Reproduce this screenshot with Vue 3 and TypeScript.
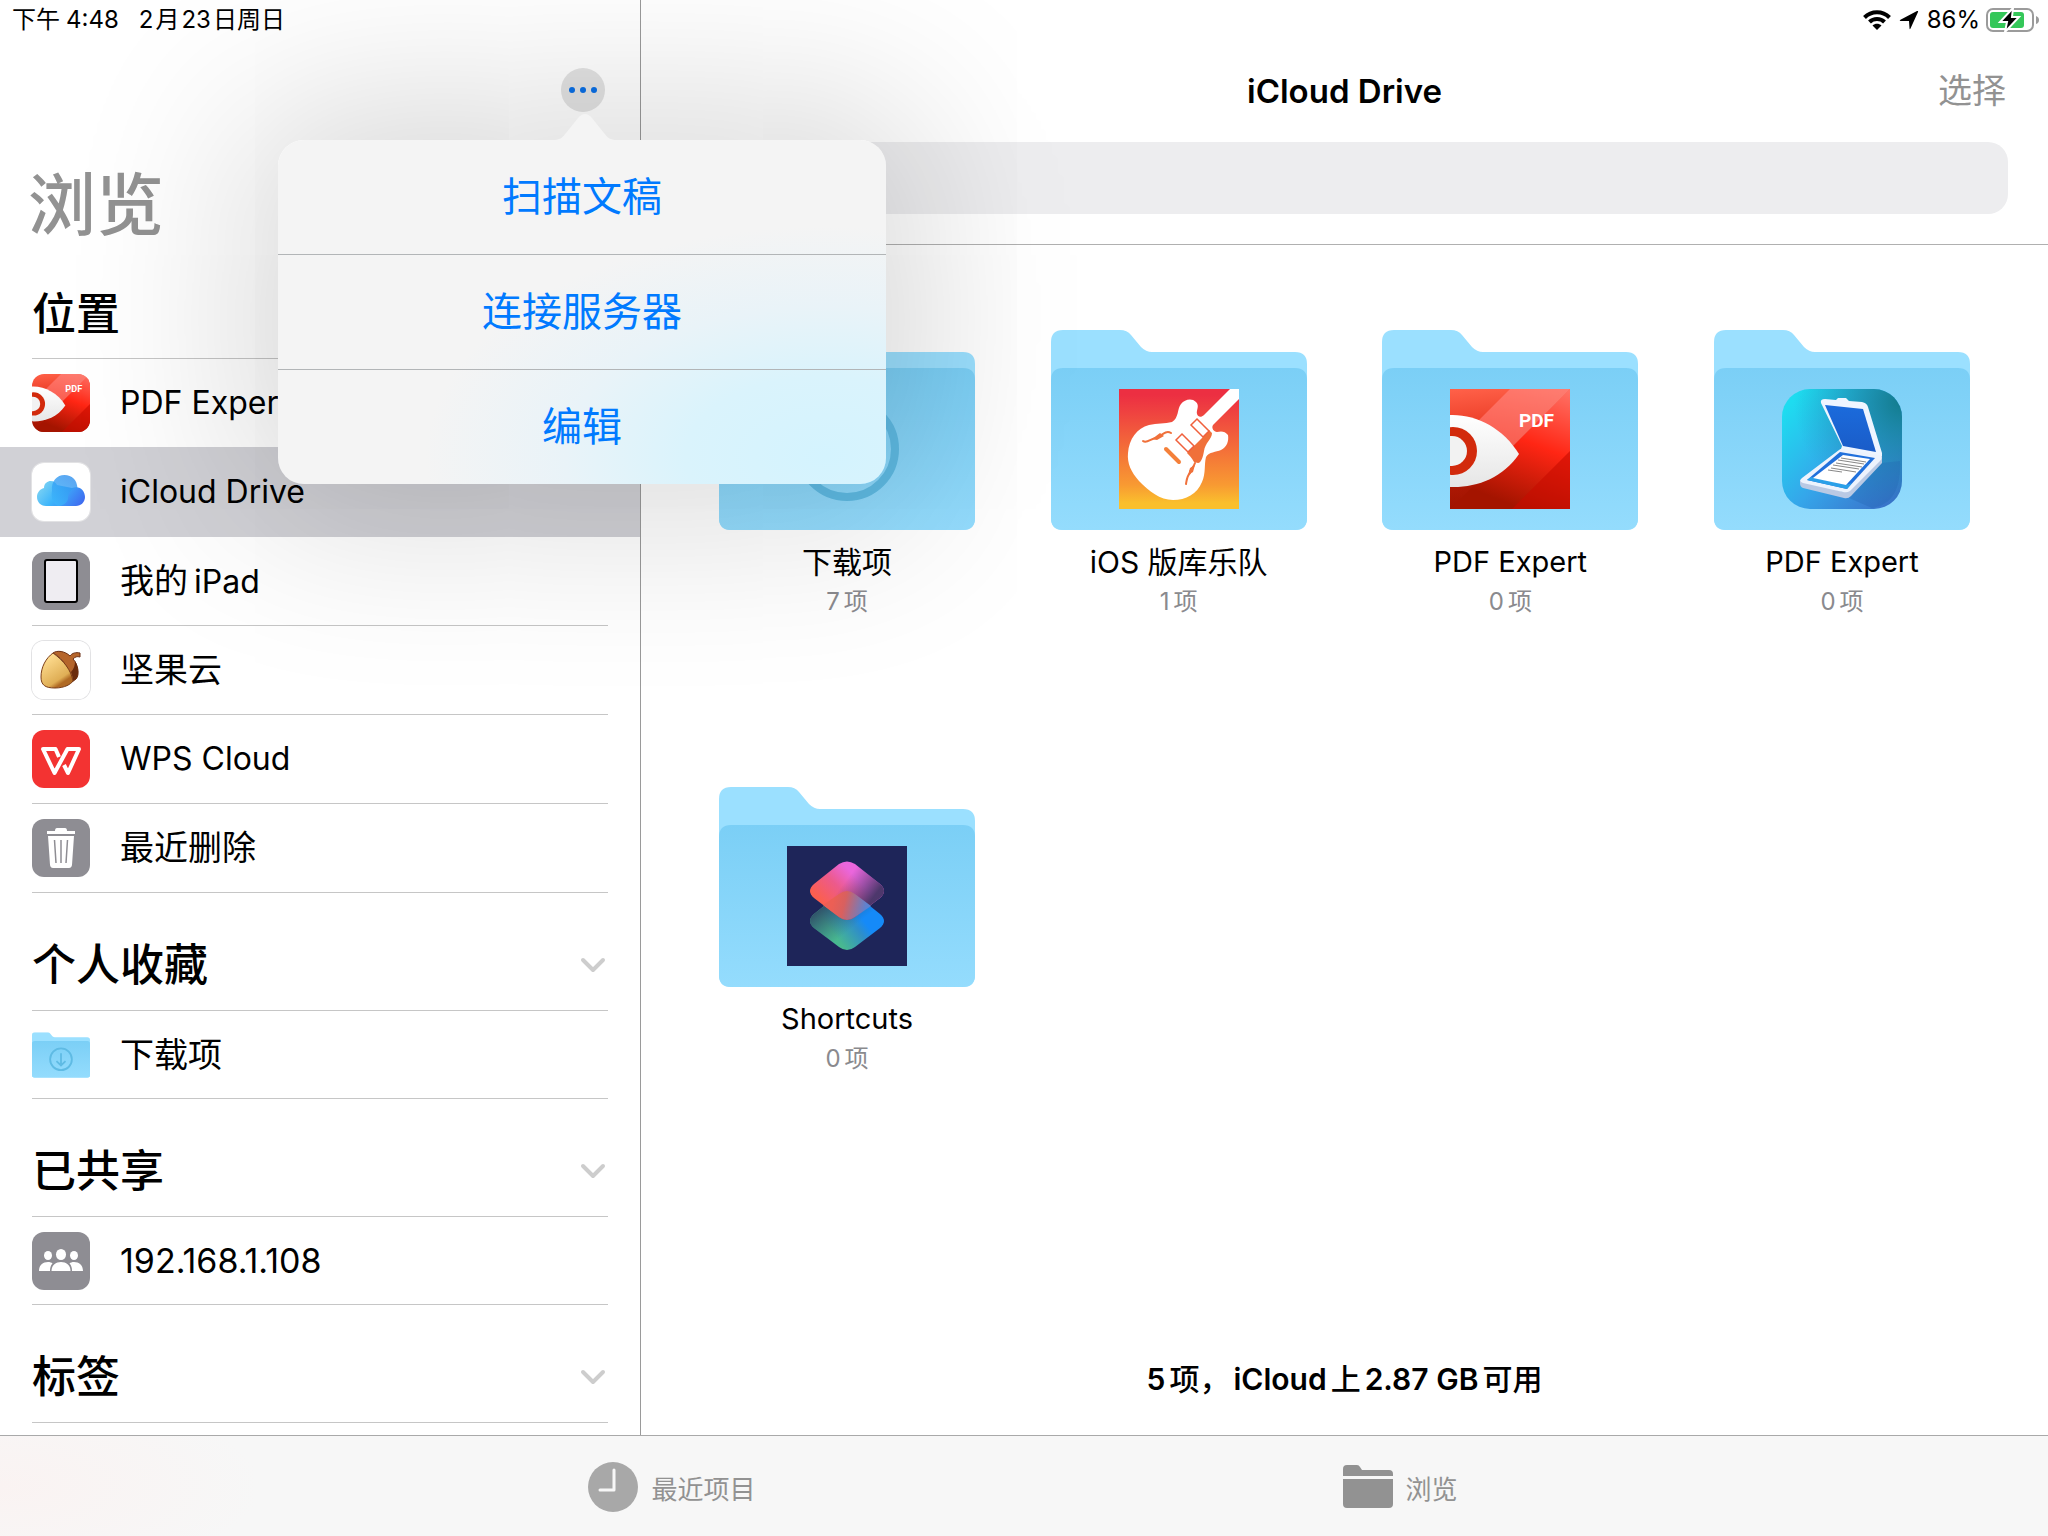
<script setup lang="ts">
import { ref } from 'vue'

interface Place { id: string; icon: string; parts: string[]; active?: boolean }
interface Section { title: string; collapsible: boolean; rows: Place[] }
interface Folder { id: string; icon: string; name: string; count: number }

const sections: Section[] = [
  {
    title: '位置',
    collapsible: false,
    rows: [
      { id: 'pdf', icon: 'pdf', parts: ['PDF Expert'] },
      { id: 'icloud', icon: 'icloud', parts: ['iCloud Drive'], active: true },
      { id: 'ipad', icon: 'ipad', parts: ['我的', 'iPad'] },
      { id: 'nut', icon: 'nut', parts: ['坚果云'] },
      { id: 'wps', icon: 'wps', parts: ['WPS Cloud'] },
      { id: 'trash', icon: 'trash', parts: ['最近删除'] },
    ],
  },
  { title: '个人收藏', collapsible: true, rows: [{ id: 'downloads', icon: 'folder', parts: ['下载项'] }] },
  { title: '已共享', collapsible: true, rows: [{ id: 'server', icon: 'people', parts: ['192.168.1.108'] }] },
  { title: '标签', collapsible: true, rows: [] },
]

const folders: Folder[] = [
  { id: 'downloads', icon: 'download', name: '下载项', count: 7 },
  { id: 'garageband', icon: 'guitar', name: 'iOS 版库乐队', count: 1 },
  { id: 'pdf', icon: 'pdf', name: 'PDF Expert', count: 0 },
  { id: 'scanner', icon: 'scanner', name: 'PDF Expert', count: 0 },
  { id: 'shortcuts', icon: 'shortcuts', name: 'Shortcuts', count: 0 },
]

const menu: string[] = ['扫描文稿', '连接服务器', '编辑']
const menuOpen = ref(true)
const query = ref('')

// Names made of Latin letters only are set a step smaller than Chinese ones.
const isLatin = (text: string): boolean => /^[A-Za-z ]+$/.test(text)
</script>

<template>
  <svg class="defs" width="0" height="0" aria-hidden="true">
    <defs>
      <linearGradient id="g-front" x1="0" y1="0" x2="0" y2="1">
        <stop offset="0" stop-color="#7bcff6" /><stop offset="1" stop-color="#94dcfd" />
      </linearGradient>
      <linearGradient id="g-pdf" x1="0.1" y1="0" x2="0.2" y2="1">
        <stop offset="0" stop-color="#ff6048" /><stop offset="0.5" stop-color="#e02a14" /><stop offset="1" stop-color="#981200" />
      </linearGradient>
      <linearGradient id="g-pdf2" x1="1" y1="0" x2="0.6" y2="1">
        <stop offset="0" stop-color="#ff7468" /><stop offset="0.5" stop-color="#ff2614" /><stop offset="1" stop-color="#a41400" />
      </linearGradient>
      <linearGradient id="g-eye" x1="0" y1="0" x2="0" y2="1">
        <stop offset="0" stop-color="#ffffff" /><stop offset="1" stop-color="#e6e6e6" />
      </linearGradient>
      <linearGradient id="g-cloud" x1="0" y1="0.3" x2="1" y2="0.7">
        <stop offset="0" stop-color="#7fd3f3" /><stop offset="0.45" stop-color="#3cb4fb" /><stop offset="1" stop-color="#3f6df0" />
      </linearGradient>
      <linearGradient id="g-cloud-top" x1="0" y1="1" x2="0.6" y2="0">
        <stop offset="0" stop-color="#3db9fc" /><stop offset="1" stop-color="#3191ef" />
      </linearGradient>
      <linearGradient id="g-nut" x1="0.2" y1="0.2" x2="0.7" y2="1">
        <stop offset="0" stop-color="#fbd88a" /><stop offset="0.7" stop-color="#dfae55" /><stop offset="0.85" stop-color="#b06a24" />
      </linearGradient>
      <linearGradient id="g-guitar" x1="0" y1="0" x2="0" y2="1">
        <stop offset="0.05" stop-color="#ec2f42" /><stop offset="0.2" stop-color="#ef4340" /><stop offset="0.8" stop-color="#f89a32" /><stop offset="0.95" stop-color="#fabf2d" />
      </linearGradient>
      <linearGradient id="g-scan" x1="0" y1="0.2" x2="0.9" y2="1">
        <stop offset="0" stop-color="#1edcf0" /><stop offset="0.5" stop-color="#35a6ea" /><stop offset="1" stop-color="#3a6fc8" />
      </linearGradient>
      <radialGradient id="g-scan-top" cx="1" cy="0.1" r="0.9">
        <stop offset="0" stop-color="#127b8c" /><stop offset="1" stop-color="#1895b0" stop-opacity="0" />
      </radialGradient>
      <linearGradient id="g-lid" x1="0" y1="0" x2="0" y2="1">
        <stop offset="0" stop-color="#1b6bdc" /><stop offset="1" stop-color="#1a5cc8" />
      </linearGradient>
      <linearGradient id="g-sc-top" x1="0.1" y1="0.6" x2="0.75" y2="0.1">
        <stop offset="0" stop-color="#fb5f50" /><stop offset="0.4" stop-color="#ec5a8c" /><stop offset="0.75" stop-color="#ea66dc" />
      </linearGradient>
      <linearGradient id="g-sc-shade" x1="0.5" y1="0.3" x2="1" y2="0.6">
        <stop offset="0" stop-color="#553a78" stop-opacity="0" /><stop offset="0.8" stop-color="#453566" stop-opacity="0.95" />
      </linearGradient>
      <linearGradient id="g-sc-low" x1="0.3" y1="0.7" x2="0.8" y2="0.4">
        <stop offset="0" stop-color="#48b890" /><stop offset="0.55" stop-color="#2f8fc8" /><stop offset="0.8" stop-color="#158af8" />
      </linearGradient>
      <linearGradient id="g-sc-low-shade" x1="0.1" y1="0.3" x2="0.5" y2="0.7">
        <stop offset="0" stop-color="#2f4e66" /><stop offset="1" stop-color="#2f5a78" stop-opacity="0" />
      </linearGradient>
      <linearGradient id="g-sc-mix" x1="0.2" y1="0.4" x2="0.9" y2="0.5">
        <stop offset="0" stop-color="#ec5f55" /><stop offset="0.35" stop-color="#d8605f" /><stop offset="1" stop-color="#5d82d0" />
      </linearGradient>

      <symbol id="i-folder" viewBox="0 0 256 200">
        <path fill="#9be0ff" d="M0 12Q0 0 12 0H69Q76 0 80 5L90 17Q95 22 101 22H244Q256 22 256 34V188Q256 200 244 200H12Q0 200 0 188Z" />
        <path fill="url(#g-front)" d="M0 50Q0 38 12 38H244Q256 38 256 50V188Q256 200 244 200H12Q0 200 0 188Z" />
      </symbol>
      <symbol id="i-download" viewBox="0 0 256 200">
        <g fill="none" stroke="#5fbbe4" stroke-width="8">
          <circle cx="128" cy="119" r="48" /><path d="M128 92V146M108 127L128 146L148 127" />
        </g>
      </symbol>
      <symbol id="i-pdf" viewBox="0 0 120 120">
        <path fill="url(#g-pdf)" d="M0 0H120V120H0Z" />
        <path fill="url(#g-pdf2)" d="M60 0H120L0 120V60Z" opacity="0.55" />
        <path fill="url(#g-pdf2)" d="M120 0V120H0Z" />
        <path fill="#ff9088" opacity="0.55" d="M60 0H120L62 58L20 40Z" />
        <path fill="#c80c00" opacity="0.6" d="M120 62V120H62Z" />
        <path fill="url(#g-eye)" d="M0 26C26 25 53 39 69 65C53 89 26 99 0 98Z" />
        <circle cx="3" cy="62" r="24" fill="#d22a0c" /><circle cx="2" cy="62" r="15" fill="#f2f2f2" />
        <text x="69" y="38" class="pdf-tag">PDF</text>
      </symbol>
      <symbol id="i-icloud" viewBox="0 0 58 58">
        <path fill="#fff" d="M0 0H58V58H0Z" />
        <path fill="url(#g-cloud)" d="M14 43C8 43 5 38.500 5 34C5 29.500 8 26 12 25C12 20 16 18 18.500 18C22 18 24 20 25 22L40 25C48 22 53 28 53 34C53 39 49 43 44 43Z" />
        <path fill="url(#g-cloud-top)" d="M20 28C19 18 25 12 32.500 12C40 12 45 17 45.500 25C40 25 36 29 36 35C36 40 30 43 26 43C20 40 19 33 20 28Z" opacity="0.8" />
      </symbol>
      <symbol id="i-ipad" viewBox="0 0 58 58">
        <path fill="#8e8d93" d="M0 0H58V58H0Z" />
        <rect x="13" y="8" width="32" height="42" rx="2" fill="#efedf2" stroke="#000" stroke-width="2" />
      </symbol>
      <symbol id="i-nut" viewBox="0 0 58 58">
        <path fill="#fff" d="M0 0H58V58H0Z" />
        <path fill="#b5652b" stroke="#6b2f14" d="M21 12C25 9 33 10 38 15C40 12 44 11 48 12L48 16C45 15 43 16 41 18C46 23 48 34 44 38L40 41C38 30 32 18 21 12Z" />
        <path fill="#6b2c0c" d="M43 20C47 26 47 35 44 38L41 40C41 37 40 34 39 31C42 28 43 24 43 20Z" />
        <path fill="url(#g-nut)" stroke="#7a3d18" d="M21 12C14 17 9 26 9 36C9 44 13 47 23 47C33 47 39 43 41 40C39 29 32 20 21 12Z" />
      </symbol>
      <symbol id="i-wps" viewBox="0 0 58 58">
        <path fill="#f33332" d="M0 0H58V58H0Z" />
        <path fill="none" stroke="#fff" stroke-width="4" stroke-linejoin="round" d="M27 27L23.500 19H11L22.500 43L35.500 19H47L36 43L32 35" />
      </symbol>
      <symbol id="i-trash" viewBox="0 0 58 58">
        <path fill="#8e8d93" d="M0 0H58V58H0Z" />
        <path fill="#fff" d="M15 12H23Q23 9 25 9H33Q35 9 35 12H43V15H15ZM16 17H42L40 46Q39.500 49 37 49H21Q18.500 49 18 46Z" />
        <path stroke="#8e8d93" stroke-width="1.500" d="M22.500 21L24 44M29 21V44M35.500 21L34 44" />
      </symbol>
      <symbol id="i-people" viewBox="0 0 58 58">
        <path fill="#8e8d93" d="M0 0H58V58H0Z" />
        <g fill="#fff">
          <ellipse cx="16" cy="23.500" rx="4" ry="4.500" /><ellipse cx="42" cy="23.500" rx="4" ry="4.500" />
          <path d="M7 39C7 33 11 30 16 30C18 30 19.500 30.500 20.500 31.500C18.500 33.500 18 36 18 39ZM51 39C51 33 47 30 42 30C40 30 38.500 30.500 37.500 31.500C39.500 33.500 40 36 40 39Z" />
          <ellipse cx="29" cy="22.500" rx="5" ry="5.500" />
          <path d="M19.500 39C19.500 33 24 30 29 30S38.500 33 38.500 39Z" />
        </g>
      </symbol>
      <symbol id="i-guitar" viewBox="0 0 120 120">
        <path fill="url(#g-guitar)" d="M0 0H120V120H0Z" />
        <path fill="#fff" d="M111 0H120V10L94 36C92 39 95 43 98 43C102 42 106 42 109 46C110 52 108 58 102 61C97 63 90 63 87 68C85 76 87 84 83 93C78 105 67 111 54 111C41 111 30 102 20 92C12 83 8 74 9 64C10 50 18 39 30 36C38 34 46 35 53 33C60 29 58 20 62 15C66 10 73 9 77 13C81 17 77 21 78 25C79 28 82 29 85 26Z" />
        <path fill="#f0703a" d="M90 41L93 44C93 50 86 54 85 62C84 68 82 74 79 74L75 73C73 69 70 66 68 64L86 46Z" />
        <g fill="#fff" stroke="#f0603c" stroke-width="1.500">
          <path d="M78 30L90 42L84 48L72 36ZM63 45L75 57L69 63L57 51Z" />
        </g>
        <path fill="none" stroke="#f4803a" stroke-width="4" stroke-linecap="round" d="M47 60L60 73" />
        <path fill="none" stroke="#f0703a" stroke-width="2" stroke-linecap="round" d="M24 52C28 55 32 49 38 49C43 46 47 41 52 44M67 95C68 89 68 87 71 84C71 80 74 80 76 74" />
        <path fill="#f0703a" d="M33 50L41 44L45 47L38 51ZM69 86L71 79L76 76L74 83Z" />
      </symbol>
      <symbol id="i-scanner" viewBox="0 0 120 120">
        <rect width="120" height="120" rx="28" fill="url(#g-scan)" /><rect width="120" height="120" rx="28" fill="url(#g-scan-top)" />
        <path fill="#2064b0" opacity="0.3" d="M100 74L118 72C119 100 110 116 90 119L67 109Z" />
        <path fill="#eef5ff" d="M39 14Q38 10 43 10L54 11L56 9H64L67 12L80 13Q85 14 86 18L100 64V70L94 69L59 60L60 57Z" />
        <path fill="url(#g-lid)" d="M43 16L81 20L94 63L61 57Z" />
        <path fill="#b9c9e4" d="M18 91L62 103L100 67V74L69 107Q66 110 62 109L21 99Q18 98 18 94Z" />
        <path fill="#edf3fd" d="M57 61Q59 59 62 60L97 66Q102 68 98 72L68 102Q65 104 61 103L21 94Q16 92 20 89Z" />
        <path fill="#2070dc" d="M58 63L93 69L65 100L25 91Z" />
        <path fill="#2aa0e8" d="M29 88L25 91L65 100L70 94L64 96Z" />
        <path fill="#fff" d="M61 66L88 70L64 96L31 89Z" />
        <path fill="none" stroke="#888" d="M59 69L84 73M56 71L82 75M54 74L80 78M51 76L77 80M49 79L74 83M46 81L60 83" />
      </symbol>
      <symbol id="i-shortcuts" viewBox="0 0 120 120">
        <path fill="#1e2559" d="M0 0H120V120H0Z" />
        <path fill="url(#g-sc-low)" d="M52 48Q60 42 68 48L93 68Q101 75 93 82L68 101Q60 107 52 101L27 82Q19 75 27 68Z" />
        <path fill="url(#g-sc-low-shade)" d="M52 48Q60 42 68 48L93 68Q101 75 93 82L68 101Q60 107 52 101L27 82Q19 75 27 68Z" />
        <path fill="url(#g-sc-top)" d="M52 18Q60 13 68 18L93 38Q101 45 93 52L68 71Q60 77 52 71L27 52Q19 45 27 38Z" />
        <path fill="url(#g-sc-shade)" d="M52 18Q60 13 68 18L93 38Q101 45 93 52L68 71Q60 77 52 71L27 52Q19 45 27 38Z" />
        <path fill="url(#g-sc-mix)" d="M36 59L52 48Q60 42 68 48L84 60L68 71Q60 77 52 71Z" />
      </symbol>
    </defs>
  </svg>

  <div class="app">
    <div class="columns">
      <aside class="sidebar">
        <div class="status">
          <span class="run">下午<span>4:48</span></span>
          <span class="run tight"><span>2</span><span>月</span><span>23</span><span>日周日</span></span>
        </div>
        <div class="tools">
          <div class="anchor">
            <button class="more" type="button" aria-label="更多" @click="menuOpen = !menuOpen">
              <svg width="28" height="8" viewBox="0 0 28 8"><g fill="#0a6fe6"><circle cx="3" cy="4" r="3" /><circle cx="14" cy="4" r="3" /><circle cx="25" cy="4" r="3" /></g></svg>
            </button>
            <div v-if="menuOpen" class="popover">
              <svg class="arrow" width="64" height="27" viewBox="0 0 64 27"><path fill="#f4f4f4" d="M0 27C7 27 9 25 13 20L25 5Q32 -3 39 5L51 20C55 25 57 27 64 27Z" /></svg>
              <div class="menu">
                <button v-for="item in menu" :key="item" class="menu-item" type="button">{{ item }}</button>
              </div>
            </div>
          </div>
        </div>
        <h1 class="heading">浏览</h1>
        <nav>
          <section v-for="s in sections" :key="s.title">
            <h2 class="section-title" :class="{ spaced: s.collapsible }">
              {{ s.title }}
              <button v-if="s.collapsible" class="fold" type="button" :aria-label="s.title">
                <svg width="26" height="16" viewBox="0 0 26 16"><path d="M3 3L13 13L23 3" fill="none" stroke="#cdcdcd" stroke-width="4" stroke-linecap="round" stroke-linejoin="round" /></svg>
              </button>
            </h2>
            <ul class="places">
              <li v-for="r in s.rows" :key="r.id" :class="{ active: r.active }">
                <a href="#" class="place">
                  <svg v-if="r.icon === 'folder'" class="mini-folder" viewBox="0 0 256 200"><use href="#i-folder" /><use href="#i-download" /></svg>
                  <span v-else class="badge" :class="r.icon"><svg width="58" height="58"><use :href="'#i-' + r.icon" /></svg></span>
                  <span class="run"><span v-for="p in r.parts" :key="p" :class="{ latin: isLatin(p) }">{{ p }}</span></span>
                </a>
              </li>
            </ul>
          </section>
        </nav>
      </aside>

      <main class="main">
        <header class="top">
          <div class="status right">
            <svg width="28" height="20" viewBox="0 0 28 20"><g fill="none" stroke="#000" stroke-width="4"><path d="M1.500 7.500C8.500 0.500 19.500 0.500 26.500 7.500" /><path d="M6.500 12C10.500 8 17.500 8 21.500 12" /></g><path d="M14 20L9.500 15.500C12 13 16 13 18.500 15.500Z" /></svg>
            <svg width="20" height="20" viewBox="0 0 20 20"><path d="M1 10L18 1Q19.500 0.500 19 2L11.500 18.500Q10.500 20 10.500 18L10 11L2 11Q0 11 1 10Z" /></svg>
            <span class="battery">86%
              <svg width="54" height="26" viewBox="0 0 54 26"><rect x="1" y="2" width="46" height="22" rx="6" fill="none" stroke="#9b9b9b" stroke-width="2" /><path fill="#9b9b9b" d="M50 9Q53 10 53 13T50 17Z" /><rect x="4" y="5" width="34" height="16" rx="3" fill="#34c759" /><path d="M27 1L14 15H21L19 25L33 10H26Z" stroke="#fff" stroke-width="2" /></svg>
            </span>
          </div>
          <div class="title-row">
            <h2 class="title">iCloud Drive</h2>
            <button class="select" type="button">选择</button>
          </div>
          <input v-model="query" class="search" type="search" aria-label="搜索" />
        </header>
        <ul class="grid">
          <li v-for="f in folders" :key="f.id">
            <a href="#" class="folder">
              <span class="art">
                <svg class="art-back" width="256" height="200"><use href="#i-folder" /><use v-if="f.icon === 'download'" href="#i-download" /></svg>
                <svg v-if="f.icon !== 'download'" class="art-icon" width="120" height="120"><use :href="'#i-' + f.icon" /></svg>
              </span>
              <span class="name" :class="{ latin: isLatin(f.name) }">{{ f.name }}</span>
              <span class="count run"><span>{{ f.count }}</span><span>项</span></span>
            </a>
          </li>
        </ul>
        <footer class="summary run"><span>5</span><span class="han">项，</span><span>iCloud</span><span class="han">上</span><span>2.87 GB</span><span class="han">可用</span></footer>
      </main>
    </div>

    <nav class="tabs">
      <a href="#" class="tab">
        <svg width="50" height="50" viewBox="0 0 50 50"><circle cx="25" cy="25" r="25" fill="#a8a8a8" /><path d="M26 8V28H12" fill="none" stroke="#f7f7f7" stroke-width="3" stroke-linecap="round" stroke-linejoin="round" /></svg>
        <span>最近项目</span>
      </a>
      <a href="#" class="tab">
        <svg width="50" height="44" viewBox="0 0 50 44"><path fill="#929292" d="M0 4Q0 0 4 0H14Q16 0 17 2L19 5H46Q50 5 50 9V11H0ZM0 14H50V39Q50 43 46 43H4Q0 43 0 39Z" /></svg>
        <span>浏览</span>
      </a>
    </nav>
  </div>
</template>

<style>
body {
  background: #fff;
}
</style>

<style scoped>
.defs {
  position: absolute;
}
.app {
  display: flex;
  flex-direction: column;
  min-height: 100vh;
  color: #000;
  font-family: Inter, "Noto Sans CJK SC", sans-serif;
}
.app * {
  box-sizing: border-box;
}
button {
  padding: 0;
  border: 0;
  background: none;
  font: inherit;
  color: inherit;
}
a {
  color: inherit;
  text-decoration: none;
}
h1,
h2,
ul {
  margin: 0;
  padding: 0;
  list-style: none;
}
svg {
  display: block;
  flex: none;
}
.run {
  display: flex;
  align-items: baseline;
  gap: 6px;
}
.run.tight {
  gap: 2px;
}
.columns {
  display: flex;
  flex: 1;
}
.sidebar {
  position: relative;
  z-index: 1;
  flex: 0 0 31.3%;
  border-right: 1px solid #9a9a9a;
}
.status {
  display: flex;
  align-items: center;
  gap: 20px;
  height: 40px;
  padding: 0 12px;
  font-size: 24px;
  line-height: 40px;
}
.status.right {
  justify-content: flex-end;
  gap: 8px;
  padding: 0 8px;
}
.battery {
  display: flex;
  align-items: center;
  gap: 6px;
}
.tools {
  display: flex;
  justify-content: flex-end;
  align-items: center;
  height: 100px;
  padding-right: 35px;
}
.anchor {
  position: relative;
}
.more {
  display: flex;
  align-items: center;
  justify-content: center;
  width: 44px;
  height: 44px;
  border-radius: 50%;
  background: #e3e3e3;
}
.popover {
  position: absolute;
  top: 72px;
  left: 50%;
  width: 608px;
  margin-left: -305px;
  border-radius: 26px;
  box-shadow: 0 0 180px 34px rgba(0, 0, 0, 0.16);
}
.arrow {
  position: absolute;
  bottom: 100%;
  left: 50%;
  margin-left: -29px;
}
.menu {
  overflow: hidden;
  border-radius: 26px;
  background: radial-gradient(ellipse 400px 230px at 90% 92%, #d4f3fe 0%, #daf3fc 35%, #e9f3f8 65%, #f4f4f4 100%);
}
.menu-item {
  display: block;
  width: 100%;
  height: 115px;
  border-bottom: 1px solid #b2b5b7;
  color: #007aff;
  font-size: 40px;
  line-height: 114px;
}
.menu-item:last-child {
  height: 114px;
  border-bottom: 0;
}
.heading {
  padding: 0 28px;
  color: #929292;
  font-size: 68px;
  font-weight: 500;
  line-height: 130px;
}
.section-title {
  display: flex;
  align-items: center;
  justify-content: space-between;
  margin: 0 32px;
  height: 89px;
  border-bottom: 1px solid #c6c6c6;
  font-size: 44px;
  font-weight: 500;
  line-height: 88px;
}
.section-title.spaced {
  height: 118px;
  padding: 26px 2px 0 0;
}
.places li {
  padding: 0 32px;
}
.places li.active {
  margin-top: -1px;
  padding-top: 1px;
  background: #d1d1d6;
}
.place {
  display: flex;
  align-items: center;
  gap: 30px;
  height: 89px;
  border-bottom: 1px solid #c6c6c6;
  font-size: 34px;
  line-height: 88px;
}
.spaced + .places .place {
  height: 88px;
}
.place .latin {
  font-size: 32px;
}
.active .place {
  border-color: transparent;
}
.badge {
  flex: none;
  width: 58px;
  height: 58px;
  overflow: hidden;
  border-radius: 12px;
}
.badge.icloud,
.badge.nut {
  box-shadow: 0 0 0 1px #e2e2e4;
}
.mini-folder {
  width: 58px;
  height: 46px;
}
.pdf-tag {
  fill: #fff;
  font: bold 19px Roboto, sans-serif;
}
.main {
  display: flex;
  flex: 1;
  flex-direction: column;
}
.top {
  height: 245px;
  border-bottom: 1px solid #b0b0b0;
}
.title-row {
  display: grid;
  grid-template-columns: 1fr auto 1fr;
  align-items: center;
  height: 102px;
  padding: 0 42px;
  font-size: 34px;
  line-height: 100px;
}
.title {
  grid-column: 2;
  font-size: 33px;
  font-weight: 600;
}
.select {
  justify-self: end;
  color: #929292;
}
.search {
  display: block;
  width: calc(100% - 80px);
  height: 72px;
  margin: 0 40px;
  padding: 0 24px;
  border: 0;
  border-radius: 20px;
  background: #ededef;
  font: inherit;
  font-size: 34px;
  appearance: none;
}
.grid {
  display: grid;
  grid-template-columns: repeat(4, 256px);
  justify-content: space-between;
  row-gap: 165px;
  padding: 85px 78px 0;
}
.folder {
  display: flex;
  flex-direction: column;
  align-items: center;
}
.art {
  display: grid;
  margin-bottom: 12px;
}
.art-back {
  grid-area: 1 / 1;
}
.art-icon {
  grid-area: 1 / 1;
  place-self: center;
  margin-top: 38px;
}
.name {
  font-size: 30px;
  line-height: 40px;
}
.name.latin {
  font-size: 29px;
}
.count {
  gap: 4px;
  color: #8a8a8e;
  font-size: 24px;
  line-height: 40px;
}
.summary {
  justify-content: center;
  gap: 4px;
  margin-top: auto;
  font-size: 30px;
  font-weight: 600;
  line-height: 112px;
}
.han {
  font-weight: 500;
}
.tabs {
  display: flex;
  justify-content: center;
  gap: 28.700%;
  height: 101px;
  padding: 2px 2px 0 0;
  border-top: 1px solid #a9a9a9;
  background: radial-gradient(ellipse 260px 100px at 0 50%, #faf3f2 0%, #f7f7f7 100%);
  color: #929292;
  font-size: 26px;
}
.tab {
  display: flex;
  align-items: center;
  gap: 13px;
}
</style>
